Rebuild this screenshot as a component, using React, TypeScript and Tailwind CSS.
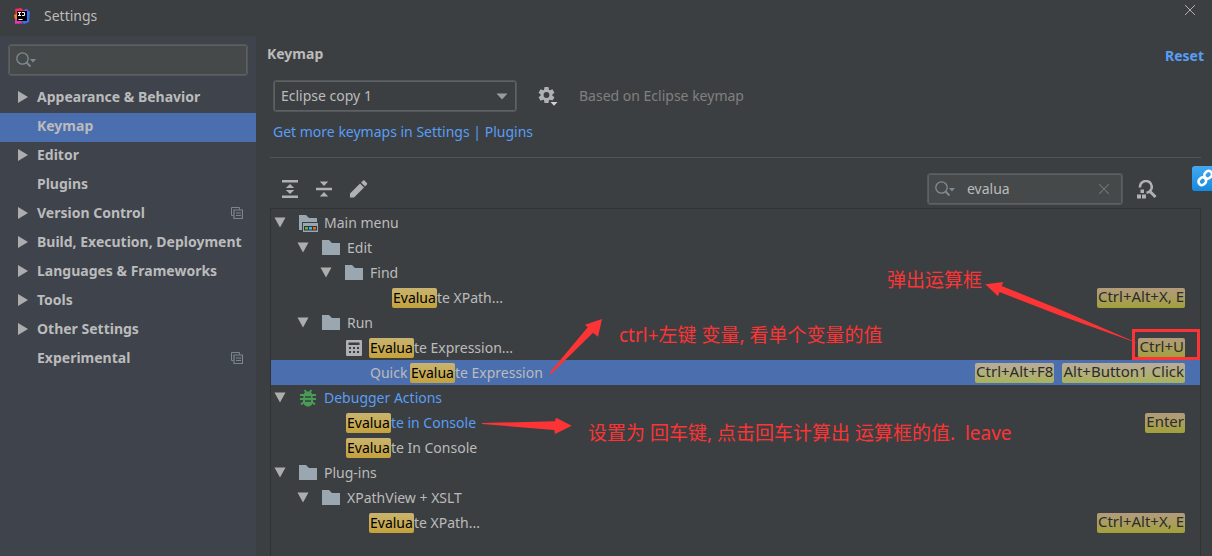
import type { ReactNode } from "react";

const SIDEBAR: { label: string; expandable?: boolean; project?: boolean; selected?: boolean }[] = [
  { label: "Appearance & Behavior", expandable: true },
  { label: "Keymap", selected: true },
  { label: "Editor", expandable: true },
  { label: "Plugins" },
  { label: "Version Control", expandable: true, project: true },
  { label: "Build, Execution, Deployment", expandable: true },
  { label: "Languages & Frameworks", expandable: true },
  { label: "Tools", expandable: true },
  { label: "Other Settings", expandable: true },
  { label: "Experimental", project: true },
];

type Row = {
  level: number;
  icon?: "menu" | "folder" | "calc" | "bug";
  open?: boolean;
  before?: string;
  match?: string;
  text: string;
  keys?: string[];
  blue?: boolean;
  selected?: boolean;
};

const ROWS: Row[] = [
  { level: 0, icon: "menu", open: true, text: "Main menu" },
  { level: 1, icon: "folder", open: true, text: "Edit" },
  { level: 2, icon: "folder", open: true, text: "Find" },
  { level: 3, match: "Evalua", text: "te XPath...", keys: ["Ctrl+Alt+X, E"] },
  { level: 1, icon: "folder", open: true, text: "Run" },
  { level: 2, icon: "calc", match: "Evalua", text: "te Expression...", keys: ["Ctrl+U"] },
  { level: 2, before: "Quick ", match: "Evalua", text: "te Expression", keys: ["Ctrl+Alt+F8", "Alt+Button1 Click"], selected: true },
  { level: 0, icon: "bug", open: true, text: "Debugger Actions", blue: true },
  { level: 1, match: "Evalua", text: "te in Console", keys: ["Enter"], blue: true },
  { level: 1, match: "Evalua", text: "te In Console" },
  { level: 0, icon: "folder", open: true, text: "Plug-ins" },
  { level: 1, icon: "folder", open: true, text: "XPathView + XSLT" },
  { level: 2, match: "Evalua", text: "te XPath...", keys: ["Ctrl+Alt+X, E"] },
];

function AppLogo() {
  return (
    <svg width="16" height="16" viewBox="0 0 16 16" aria-hidden="true">
      <path d="M1 1l6-1 3 3v10l-5 3-4-1 1-5z" fill="#fe2857" />
      <path d="M0 7l4-2v7l-3-1z" fill="#fc801d" />
      <path d="M9 3l3-2 4 3-1 10-5 2-3-3z" fill="#3574f0" />
      <path d="M9 3l3-2 2 1-1 3z" fill="#7b54e0" />
      <path d="M1 11l5 2 3 3-4-1-4 1z" fill="#d63cc0" />
      <rect x="3" y="3" width="10" height="10" fill="#000" />
      <path d="M4 4.500h3M5.500 4.500v3M4 7.500h3M8 4.500h2.500v3h-2.500M4.500 11.500h4" stroke="#fff" fill="none" />
    </svg>
  );
}

function SearchGlyph() {
  return (
    <svg width="20" height="16" viewBox="0 0 20 16" fill="none" className="shrink-0" aria-hidden="true">
      <circle cx="6.500" cy="6.500" r="5.700" stroke="#7f8b91" strokeWidth="1.300" />
      <path d="M10.500 10.500l4 4" stroke="#7f8b91" strokeWidth="1.800" />
      <path d="M14 7h6l-3 3.500z" fill="#7f8b91" />
    </svg>
  );
}

function RightTriangle() {
  return (
    <svg width="10" height="12" viewBox="0 0 10 12" aria-hidden="true">
      <path d="M0 0l10 6-10 6z" fill="#adadad" />
    </svg>
  );
}

function DownTriangle() {
  return (
    <svg width="12" height="11" viewBox="0 0 12 11" aria-hidden="true">
      <path d="M0.500 0.500h11L6 10.500z" fill="#adadad" />
    </svg>
  );
}

function ProjectIcon() {
  return (
    <svg width="12" height="12" viewBox="0 0 12 12" fill="none" stroke="#7d868e" aria-hidden="true">
      <path d="M2.500 8.500h-2v-8h8v2" />
      <path d="M3 3h8.500v8.500H3z" strokeWidth="1.200" />
      <path d="M5 6h5M5 8.500h5" />
    </svg>
  );
}

function Gear() {
  return (
    <svg width="20" height="20" viewBox="0 0 20 20" aria-hidden="true">
      <g fill="#afb1b3">
        <path d="M6.500 1h4l.6 3.500H5.900zM6.500 17h4l.6-3.500H5.900z" />
        <path d="M6.500 1h4l.6 3.500H5.900zM6.500 17h4l.6-3.500H5.900z" transform="rotate(60 8.500 9)" />
        <path d="M6.500 1h4l.6 3.500H5.900zM6.500 17h4l.6-3.500H5.900z" transform="rotate(120 8.500 9)" />
        <circle cx="8.500" cy="9" r="5.800" />
      </g>
      <circle cx="8.500" cy="9" r="2.900" fill="#3c3f41" />
      <path d="M11 14.500h9V20h-5z" fill="#3c3f41" />
      <path d="M12.500 16h7l-3.500 3.800z" fill="#d0d2d4" />
    </svg>
  );
}

function ExpandAll() {
  return (
    <svg width="16" height="18" viewBox="0 0 16 18" fill="#afb1b3" aria-hidden="true">
      <path d="M0 0h16v2.600H0zM0 15.400h16V18H0zM8 4l4.200 4H3.800zM8 14l4.200-4H3.800z" />
    </svg>
  );
}

function CollapseAll() {
  return (
    <svg width="16" height="16" viewBox="0 0 16 16" fill="#afb1b3" aria-hidden="true">
      <path d="M0 6.700h16v2.600H0zM8 5l4.200-4.500H3.800zM8 11l4.200 4.500H3.800z" />
    </svg>
  );
}

function Pencil() {
  return (
    <svg width="18" height="18" viewBox="0 0 18 18" fill="#afb1b3" aria-hidden="true">
      <path d="M0 17.500v-4L10 3.500l4 4-10 10zM11 2.500L13 .7c.5-.5 1.200-.5 1.700 0l2.200 2.200c.5.5.5 1.200 0 1.700l-1.900 1.900z" />
    </svg>
  );
}

function FindByShortcut() {
  return (
    <svg width="20" height="19" viewBox="0 0 20 19" aria-hidden="true">
      <path d="M3 7.500a5.900 5.900 0 1 1 6.500 5.300" fill="none" stroke="#afb1b3" strokeWidth="2.600" />
      <path d="M12.500 11l6 6" stroke="#afb1b3" strokeWidth="3" />
      <path d="M3.500 9.500H7V13H3.500zM0 14.500h4v4H0zM5 14.500h4v4H5z" fill="#afb1b3" />
    </svg>
  );
}

function RowIcon({ kind }: { kind: NonNullable<Row["icon"]> }) {
  if (kind === "calc")
    return (
      <svg width="16" height="16" viewBox="0 0 16 16" className="ml-px" aria-hidden="true">
        <rect width="16" height="16" rx="1" fill="#afb1b3" />
        <path d="M2.500 2.500h11v2.500h-11zM3 7h2v2H3zM7 7h2v2H7zM11 7h2v2h-2zM3 11h2v2H3zM7 11h2v2H7zM11 11h2v2h-2z" fill="#3c3f41" />
      </svg>
    );
  if (kind === "bug")
    return (
      <svg width="18" height="18" viewBox="0 0 18 18" aria-hidden="true">
        <path d="M5.500 1l2 2.500M12.500 1l-2 2.500M1 6h4M13 6h4M1 10h4M13 10h4M2 15.500L5 13M16 15.500L13 13" stroke="#499c54" strokeWidth="2" />
        <path d="M4.500 6C5 3.500 6.500 2.500 9 2.500s4 1 4.500 3.500L14 12c0 3-2 5.500-5 5.500S4 15 4 12z" fill="#499c54" />
        <path d="M6 8h6M6 12h6" stroke="#3c3f41" strokeWidth="1.400" />
      </svg>
    );
  return (
    <svg width="20" height="18" viewBox="0 0 20 18" aria-hidden="true">
      <path d="M0 1h7l3 3h8v12H0z" fill="#9aa7b0" />
      {kind === "menu" && (
        <>
          <path d="M3 8h17v10H3z" fill="#3c3f41" />
          <path d="M4 9h15v9H4z" fill="#9aa7b0" />
          <path d="M5 12h13v4.500H5z" fill="#30343a" />
          <path d="M6 13h3v2.500H6z" fill="#62b543" />
          <path d="M10 13h3v2.500h-3z" fill="#40b6e0" />
          <path d="M14 13h3v2.500h-3z" fill="#f26522" />
        </>
      )}
    </svg>
  );
}

function Shortcut({ children, selected }: { children: ReactNode; selected?: boolean }) {
  return (
    <kbd
      className={
        "flex h-5 items-center rounded-[2px] bg-linear-to-b px-px pb-1 font-['Noto_Sans','Noto_Sans_CJK_SC',sans-serif] text-[15px] leading-5 text-[#2b2c2c] " +
        (selected ? "from-[#baab9b] to-[#a9b257]" : "from-[#b39b7c] to-[#a2a037]")
      }
    >
      {children}
    </kbd>
  );
}

function TreeRow({ row }: { row: Row }) {
  return (
    <li className={"flex h-[25px] items-center pr-[15px] pl-[3px] " + (row.selected ? "bg-[#4b6eaf]" : "")}>
      {Array.from({ length: row.level }, (_, i) => (
        <span key={i} className="w-[23px] shrink-0" />
      ))}
      <span className="flex w-[25px] shrink-0 items-center">
        {row.open && (
          <button type="button" aria-label={"Collapse " + row.text}>
            <DownTriangle />
          </button>
        )}
      </span>
      <span className="flex w-[25px] shrink-0 items-center">{row.icon && <RowIcon kind={row.icon} />}</span>
      <span className={"flex items-center whitespace-pre " + (row.blue ? "text-[#589df6]" : "text-[#bbbbbb]")}>
        {row.before}
        {row.match && (
          <mark className="-ml-px flex h-5 items-center rounded-[2px] bg-linear-to-b from-[#c9b46f] to-[#c4a23b] px-px text-black">
            {row.match}
          </mark>
        )}
        {row.text}
      </span>
      <span className="ml-auto flex gap-2">
        {row.keys?.map((k) => (
          <Shortcut key={k} selected={row.selected}>
            {k}
          </Shortcut>
        ))}
      </span>
    </li>
  );
}

export default function App() {
  return (
    <div className="flex min-h-screen flex-col bg-[#3c3f41] font-['Noto_Sans','Noto_Sans_CJK_SC',sans-serif] text-[14px] leading-5 text-[#bbbbbb]">
      <header className="flex h-9 items-center pr-4 pb-1 pl-[14px]">
        <AppLogo />
        <h1 className="ml-[14px]">Settings</h1>
        <button type="button" aria-label="Close" className="mb-3 ml-auto">
          <svg width="12" height="12" viewBox="0 0 12 12" stroke="#b0b0b0" aria-hidden="true">
            <path d="M1 1l10 10M11 1L1 11" />
          </svg>
        </button>
      </header>

      <div className="flex flex-1">
        <aside className="w-64 shrink-0 bg-[#3e434c] pt-2">
          <label className="mr-2 ml-2 flex h-8 items-center rounded-[3px] border border-[#55585a] bg-[#45494a] pl-[7px] inset-ring inset-ring-[#5e6162]">
            <SearchGlyph />
            <input type="text" aria-label="Search settings" className="min-w-0 flex-1 bg-transparent outline-none" />
          </label>
          <nav className="mt-2">
            <ul>
              {SIDEBAR.map((item) => (
                <li key={item.label}>
                  <a
                    href="#"
                    className={
                      "flex h-[29px] items-center pr-[13px] pb-1 pl-[18px] font-bold " + (item.selected ? "bg-[#4b6eaf]" : "")
                    }
                  >
                    <span className="w-[19px] shrink-0">{item.expandable && <RightTriangle />}</span>
                    <span className="whitespace-nowrap">{item.label}</span>
                    {item.project && (
                      <span className="ml-auto">
                        <ProjectIcon />
                      </span>
                    )}
                  </a>
                </li>
              ))}
            </ul>
          </nav>
        </aside>

        <main className="relative flex min-w-0 flex-1 flex-col pr-[11px] pl-[14px]">
          <div className="-mr-[3px] -ml-[3px] flex h-11 items-center justify-between pb-1">
            <h2 className="pb-1 font-bold">Keymap</h2>
            <button type="button" className="font-bold text-[#589df6]">
              Reset
            </button>
          </div>

          <div className="flex h-8 items-center pl-[3px]">
            <span className="grid w-[244px] items-center">
              <select
                aria-label="Keymap"
                className="col-start-1 row-start-1 h-8 w-full appearance-none rounded-[3px] border border-[#55585a] bg-[#3c3f41] pl-[7px] text-[#bbbbbb] inset-ring inset-ring-[#5e6162]"
              >
                <option>Eclipse copy 1</option>
              </select>
              <svg width="12" height="7" viewBox="0 0 12 7" className="pointer-events-none col-start-1 row-start-1 mr-[9px] justify-self-end" aria-hidden="true">
                <path d="M0.500 0.500h11L6 6.500z" fill="#9a9da0" />
              </svg>
            </span>
            <button type="button" aria-label="Keymap actions" className="ml-[21px]">
              <Gear />
            </button>
            <span className="ml-[21px] text-[#808080]">Based on Eclipse keymap</span>
          </div>

          <div className="mt-2.5 pl-[3px]">
            <a href="#" className="text-[#589df6]">
              Get more keymaps in Settings | Plugins
            </a>
          </div>
          <hr className="mt-[15px] border-[#515456]" />

          <div className="flex h-[50px] items-center pt-3">
            <div className="flex items-center gap-[18px] pl-3">
              <button type="button" aria-label="Expand all">
                <ExpandAll />
              </button>
              <button type="button" aria-label="Collapse all">
                <CollapseAll />
              </button>
              <button type="button" aria-label="Edit shortcut">
                <Pencil />
              </button>
            </div>
            <label className="ml-auto flex h-8 w-[196px] items-center rounded-[3px] border border-[#55585a] bg-[#45494a] pr-[13px] pl-[7px] inset-ring inset-ring-[#5e6162]">
              <SearchGlyph />
              <input
                type="text"
                aria-label="Search actions"
                defaultValue="evalua"
                className="ml-3 min-w-0 flex-1 bg-transparent text-[#bbbbbb] outline-none"
              />
              <button type="button" aria-label="Clear search">
                <svg width="10" height="10" viewBox="0 0 10 10" stroke="#6e7375" strokeWidth="1.200" aria-hidden="true">
                  <path d="M0 0l10 10M10 0L0 10" />
                </svg>
              </button>
            </label>
            <button type="button" aria-label="Find by shortcut" className="mr-11 ml-3.5">
              <FindByShortcut />
            </button>
          </div>

          <div className="relative flex-1 border-x border-t border-[#303234] pt-px">
            <ul>
              {ROWS.map((row, i) => (
                <TreeRow key={i} row={row} />
              ))}
            </ul>

            {/* Annotations lying over the action tree */}
            <div className="pointer-events-none absolute inset-0 text-[19px] leading-7 whitespace-pre text-[#fd3435]">
              <svg className="absolute top-[105px] left-[200px]" width="140" height="130" viewBox="0 0 140 130" fill="#fd3435" aria-hidden="true">
                <path d="M78.500 59L116.700 13.300 114 10.700 131 5 127 22.700 122 18.700 80 60z" />
                <path d="M11 109L84 107.300 85 103.700 100.700 111.700 84 120 83.300 116 11 110z" />
              </svg>
              <p className="absolute top-[112px] left-[348px]">ctrl+左键 变量, 看单个变量的值</p>
              <p className="absolute top-[210px] left-[317px]">设置为 回车键, 点击回车计算出 运算框的值.  leave</p>
              <p className="absolute top-[57px] right-[218px]">弹出运算框</p>
              <svg className="absolute top-[70px] right-[60px]" width="160" height="80" viewBox="0 0 160 80" fill="#fd3435" aria-hidden="true">
                <path d="M5.300 5.300L23.300 3 21.700 7 80 30.500 159.300 64.700 80 36.500 19.500 13 18 17.300z" />
              </svg>
              <div className="absolute top-[120px] right-0 h-[31px] w-[68px] border-3 border-[#fd3435]" />
            </div>
          </div>

          <button
            type="button"
            aria-label="Link"
            className="absolute top-[130px] right-0 flex h-[25px] w-5 overflow-hidden rounded-l-[3px] bg-linear-to-b from-[#42a9f0] to-[#1389dd]"
          >
            <svg width="25" height="25" viewBox="0 0 25 25" fill="none" stroke="#fff" strokeWidth="2.600" className="shrink-0" aria-hidden="true">
              <rect x="-5" y="-3.400" width="8" height="6.800" rx="3.400" transform="translate(11 14.500) rotate(-48)" />
              <rect x="-3" y="-3.400" width="8" height="6.800" rx="3.400" transform="translate(15.500 9.500) rotate(-48)" />
            </svg>
          </button>
        </main>
      </div>
    </div>
  );
}
